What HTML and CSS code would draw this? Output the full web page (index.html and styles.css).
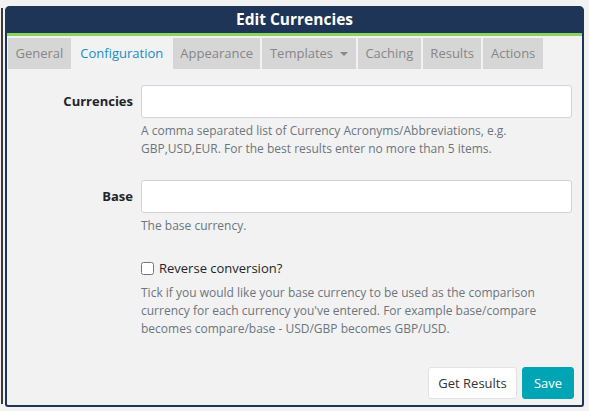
FILE: index.html
```html
<!DOCTYPE html>
<html>
<head>
<meta charset="utf-8">
<link rel="stylesheet" href="styles.css">
</head>
<body>
<div class="page">
  <div class="edge"></div>
  <div class="panel">
    <div class="panel-header">Edit Currencies</div>
    <div class="stripe"></div>
    <div class="tabs">
      <div class="tab">General</div>
      <div class="tab active">Configuration</div>
      <div class="tab">Appearance</div>
      <div class="tab">Templates <span class="caret"></span></div>
      <div class="tab">Caching</div>
      <div class="tab">Results</div>
      <div class="tab">Actions</div>
    </div>
    <div class="form">
      <label class="label">Currencies</label>
      <div class="field">
        <div class="input"></div>
        <p class="help">A comma separated list of Currency Acronyms/Abbreviations, e.g. GBP,USD,EUR. For the best results enter no more than 5 items.</p>
      </div>
      <label class="label">Base</label>
      <div class="field">
        <div class="input"></div>
        <p class="help">The base currency.</p>
      </div>
      <div></div>
      <div class="field">
        <label class="check"><input type="checkbox"> Reverse conversion?</label>
        <p class="help">Tick if you would like your base currency to be used as the comparison currency for each currency you've entered. For example base/compare becomes compare/base - USD/GBP becomes GBP/USD.</p>
      </div>
    </div>
    <div class="actions">
      <button class="btn btn-light">Get Results</button>
      <button class="btn btn-info">Save</button>
    </div>
  </div>
</div>
</body>
</html>
```
FILE: styles.css
```css
html, body {
  margin: 0;
  padding: 0;
  background: #f2f2f2;
  font-family: "Open Sans", "Noto Sans", sans-serif;
  color: #212529;
}
.page {
  display: flex;
  align-items: flex-start;
  height: 411px;
}
.edge {
  width: 2px;
  margin-left: 1px;
  margin-top: 8px;
  height: 396px;
  background: #3b3b3b;
}
.panel {
  margin-left: 2px;
  margin-top: 6px;
  width: 575px;
  border: 2px solid #1f3557;
  border-top: 0;
  border-radius: 5px 5px 3px 3px;
  background: #f2f2f2;
  height: 399px;
  display: flex;
  flex-direction: column;
}
.panel-header {
  background: #1f3557;
  color: #fff;
  height: 27px;
  line-height: 27px;
  text-align: center;
  font-weight: 700;
  font-size: 15.5px;
  margin: 0 -2px;
  border-radius: 5px 5px 0 0;
}
.stripe {
  height: 3px;
  background: #8cd35f;
}
.tabs {
  display: flex;
  gap: 2px;
  margin: 2px 0 0 1px;
}
.tab {
  height: 31px;
  line-height: 31px;
  padding: 0 7.5px;
  background: #d6d6d6;
  color: #868686;
  font-size: 13px;
  white-space: nowrap;
}
.tab.active {
  background: transparent;
  color: #1a8cc4;
}
.caret {
  display: inline-block;
  width: 0;
  height: 0;
  border-left: 4px solid transparent;
  border-right: 4px solid transparent;
  border-top: 4px solid #888;
  vertical-align: 2px;
  margin-left: 4px;
}
.form {
  display: grid;
  grid-template-columns: 126px 1fr;
  column-gap: 8px;
  row-gap: 22px;
  padding: 16px 10px 0 0;
}
.label {
  text-align: right;
  font-weight: 700;
  font-size: 13px;
  height: 33px;
  line-height: 33px;
  color: #212529;
}
.input {
  height: 31px;
  background: #fff;
  border: 1px solid #ced4da;
  border-radius: 3px;
}
.help {
  margin: 4px 0 0;
  font-size: 12px;
  line-height: 18px;
  color: #6c757d;
}
.check {
  display: flex;
  align-items: center;
  font-size: 13px;
  height: 18px;
  color: #212529;
  margin-top: 2px;
}
.check input {
  width: 13px;
  height: 13px;
  margin: 0 5px 0 0;
}
.check + .help {
  margin-top: 7px;
}
.actions {
  margin-top: auto;
  display: flex;
  justify-content: flex-end;
  gap: 5px;
  padding: 0 8px 6px 0;
}
.btn {
  height: 32px;
  border-radius: 3px;
  font-family: "Open Sans", "Noto Sans", sans-serif;
  font-size: 13px;
  padding: 0;
  white-space: nowrap;
  cursor: pointer;
}
.btn-light {
  background: #fff;
  border: 1px solid #e2e2e2;
  color: #333;
  width: 89px;
}
.btn-info {
  background: #00a5b5;
  border: 1px solid #00a5b5;
  color: #fff;
  width: 52px;
}
```
